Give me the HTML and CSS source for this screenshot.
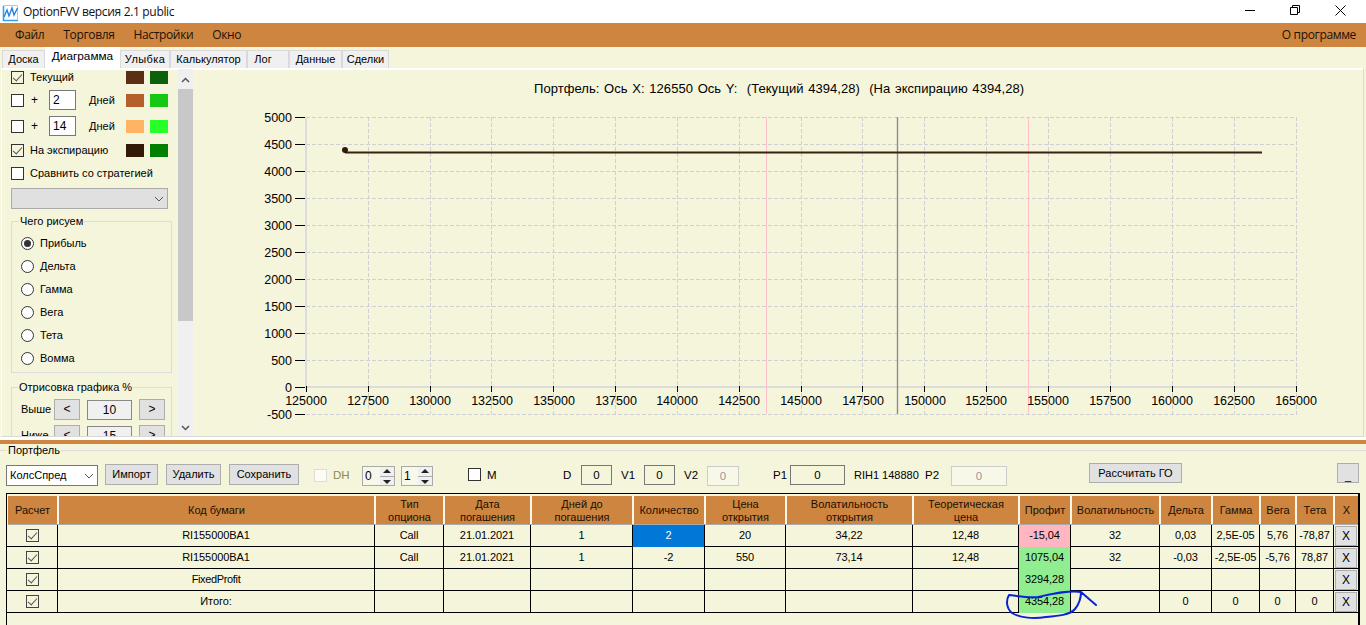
FILE: index.html
```html
<!DOCTYPE html>
<html lang="ru">
<head>
<meta charset="utf-8">
<title>OptionFVV</title>
<link rel="stylesheet" href="styles.css">
</head>
<body>
<div class="app">
  <header class="titlebar">
    <svg class="logo" width="18" height="20" viewBox="0 0 18 20"><path d="M2.5 4V18.5H17" fill="none" stroke="#35a0f0" stroke-width="1.6"/><path d="M2.5 3.5H16.5V18" fill="none" stroke="#9ccff2" stroke-width="1"/><path d="M3 15L6 8L8 14L11 6L13 13L16.500 6" fill="none" stroke="#2484dc" stroke-width="1.4"/></svg>
    <span class="apptitle">OptionFVV версия 2.1 public</span>
    <div class="winctl">
      <svg width="11" height="11" viewBox="0 0 11 11"><path d="M0 5.5H10" stroke="#000"/></svg>
      <svg width="11" height="11" viewBox="0 0 11 11"><path d="M.5 2.5H7.5V9.5H.5ZM2.5 2.5V.5H9.5V7.5H7.5" fill="none" stroke="#000"/></svg>
      <svg width="11" height="11" viewBox="0 0 11 11"><path d="M.5 .5L10.5 10.5M10.5 .5L.5 10.5" stroke="#000"/></svg>
    </div>
  </header>

  <nav class="menubar">
    <span class="mi m1">Файл</span><span class="mi m2">Торговля</span><span class="mi m3">Настройки</span><span class="mi m4">Окно</span>
    <span class="mi about">О программе</span>
  </nav>

  <div class="tabs">
    <span class="tab t1">Доска</span><span class="tab t2 active">Диаграмма</span><span class="tab t3">Улыбка</span><span class="tab t4">Калькулятор</span><span class="tab t5">Лог</span><span class="tab t6">Данные</span><span class="tab t7">Сделки</span>
  </div>

  <section class="page">
    <aside class="side">
      <div class="row r1"><span class="cb on"></span><span class="txt w96">Текущий</span><span class="sw c1"></span><span class="sw c2"></span></div>
      <div class="row r2"><span class="cb"></span><span class="plus">+</span><span class="days">2</span><span class="dl">Дней</span><span class="sw c3"></span><span class="sw c4"></span></div>
      <div class="row r3"><span class="cb"></span><span class="plus">+</span><span class="days">14</span><span class="dl">Дней</span><span class="sw c5"></span><span class="sw c6"></span></div>
      <div class="row r4"><span class="cb on"></span><span class="txt w96">На экспирацию</span><span class="sw c7"></span><span class="sw c8"></span></div>
      <div class="row r5"><span class="cb"></span><span class="txt">Сравнить со стратегией</span></div>
      <div class="combo dis"><svg width="10" height="6" viewBox="0 0 10 6"><path d="M1 1L5 5L9 1" fill="none" stroke="#555"/></svg></div>
      <fieldset class="grp g1">
        <legend>Чего рисуем</legend>
        <div class="rad"><span class="ro on"></span>Прибыль</div>
        <div class="rad"><span class="ro"></span>Дельта</div>
        <div class="rad"><span class="ro"></span>Гамма</div>
        <div class="rad"><span class="ro"></span>Вега</div>
        <div class="rad"><span class="ro"></span>Тета</div>
        <div class="rad"><span class="ro"></span>Вомма</div>
      </fieldset>
      <fieldset class="grp g2">
        <legend>Отрисовка графика %</legend>
        <div class="pr"><span class="prl">Выше</span><span class="pb">&lt;</span><span class="pv">10</span><span class="pb">&gt;</span></div>
        <div class="pr"><span class="prl">Ниже</span><span class="pb">&lt;</span><span class="pv">15</span><span class="pb">&gt;</span></div>
      </fieldset>
    </aside>
    <div class="vscroll">
      <svg class="arr" width="9" height="6" viewBox="0 0 9 6"><path d="M1 5L4.5 1.5L8 5" fill="none" stroke="#555" stroke-width="1.5"/></svg>
      <div class="thumb"></div>
      <svg class="arr dn" width="9" height="6" viewBox="0 0 9 6"><path d="M1 1L4.5 4.5L8 1" fill="none" stroke="#555" stroke-width="1.5"/></svg>
    </div>
    <div class="chart">
      <svg class="plot" width="1170" height="367" viewBox="193 69 1170 367">
        <g class="grid">
          <path d="M306 117.5H1297M306 144.5H1297M306 171.5H1297M306 198.5H1297M306 225.5H1297M306 252.5H1297M306 279.5H1297M306 306.5H1297M306 333.5H1297M306 360.5H1297M306 414.5H1297"/>
          <path d="M368.5 117V414M430.5 117V414M491.5 117V414M553.5 117V414M615.5 117V414M677.5 117V414M739.5 117V414M801.5 117V414M862.5 117V414M924.5 117V414M986.5 117V414M1048.5 117V414M1110.5 117V414M1172.5 117V414M1234.5 117V414M1296.5 117V414"/>
        </g>
        <path class="axis" d="M306 117V388M305 387H1297"/>
        <path class="pink" d="M766.5 117V414M1028.5 117V414"/>
        <path class="spot" d="M897.5 117V414"/>
        <path class="ticks" d="M295 117.5H305M295 144.5H305M295 171.5H305M295 198.5H305M295 225.5H305M295 252.5H305M295 279.5H305M295 306.5H305M295 333.5H305M295 360.5H305M295 387.5H305M295 414.5H305M306.5 386V392M368.5 386V392M430.5 386V392M491.5 386V392M553.5 386V392M615.5 386V392M677.5 386V392M739.5 386V392M801.5 386V392M862.5 386V392M924.5 386V392M986.5 386V392M1048.5 386V392M1110.5 386V392M1172.5 386V392M1234.5 386V392M1296.5 386V392"/>
        <path class="series" d="M345 152.5H1262"/>
        <circle class="dot" cx="345" cy="150" r="3"/>
        <text class="ctitle" x="534" y="93" xml:space="preserve">Портфель: Ось X: 126550 Ось Y:  (Текущий 4394,28)  (На экспирацию 4394,28)</text>
        <g class="yl">
          <text x="292" y="122">5000</text><text x="292" y="149">4500</text><text x="292" y="176">4000</text><text x="292" y="203">3500</text><text x="292" y="230">3000</text><text x="292" y="257">2500</text><text x="292" y="284">2000</text><text x="292" y="311">1500</text><text x="292" y="338">1000</text><text x="292" y="365">500</text><text x="292" y="392">0</text><text x="292" y="419">-500</text>
        </g>
        <g class="xl">
          <text x="306" y="405">125000</text><text x="368" y="405">127500</text><text x="430" y="405">130000</text><text x="492" y="405">132500</text><text x="554" y="405">135000</text><text x="616" y="405">137500</text><text x="677" y="405">140000</text><text x="739" y="405">142500</text><text x="801" y="405">145000</text><text x="863" y="405">147500</text><text x="925" y="405">150000</text><text x="986" y="405">152500</text><text x="1048" y="405">155000</text><text x="1110" y="405">157500</text><text x="1172" y="405">160000</text><text x="1234" y="405">162500</text><text x="1296" y="405">165000</text>
        </g>
      </svg>
    </div>
  </section>

  <div class="split"></div>

  <fieldset class="portfolio">
    <legend>Портфель</legend>
    <div class="toolbar">
      <div class="combo pick w92 t2m"><span>КолсСпред</span><svg width="10" height="6" viewBox="0 0 10 6"><path d="M1 1L5 5L9 1" fill="none" stroke="#555"/></svg></div>
      <span class="btn ml7 w53 t1m">Импорт</span>
      <span class="btn ml8 w55 t1m">Удалить</span>
      <span class="btn ml8 w70 t1m">Сохранить</span>
      <span class="cb off ml15 t6m"></span>
      <span class="lb dim ml6 w16">DH</span>
      <div class="spin ml13 w33"><span>0</span><i class="sbs"><b class="up"></b><b class="down"></b></i></div>
      <div class="spin ml6 w32"><span>1</span><i class="sbs"><b class="up"></b><b class="down"></b></i></div>
      <span class="cb ml35 t5m"></span>
      <span class="lb ml6 w12">M</span>
      <span class="lb ml64 w9">D</span>
      <span class="fld ml9 w31">0</span>
      <span class="lb ml9 w13">V1</span>
      <span class="fld ml10 w31">0</span>
      <span class="lb ml9 w14">V2</span>
      <span class="fld off ml9 w32">0</span>
      <span class="lb ml34 w12">P1</span>
      <span class="fld ml5 w55">0</span>
      <span class="lb tight ml9 w63">RIH1 148880</span>
      <span class="lb ml8 w16">P2</span>
      <span class="fld off ml10 w56">0</span>
      <span class="btn hi ml82 w93">Рассчитать ГО</span>
      <span class="btn hi low ml155 w22">_</span>
    </div>

    <div class="table">
      <div class="tr th">
        <span>Расчет</span><span>Код бумаги</span><span>Тип<br>опциона</span><span>Дата<br>погашения</span><span>Дней до<br>погашения</span><span>Количество</span><span>Цена<br>открытия</span><span>Волатильность<br>открытия</span><span>Теоретическая<br>цена</span><span>Профит</span><span>Волатильность</span><span>Дельта</span><span>Гамма</span><span>Вега</span><span>Тета</span><span>X</span>
      </div>
      <div class="tr">
        <span><i class="cb on"></i></span><span>RI155000BA1</span><span>Call</span><span>21.01.2021</span><span>1</span><span class="sel">2</span><span>20</span><span>34,22</span><span>12,48</span><span class="loss">-15,04</span><span>32</span><span>0,03</span><span>2,5E-05</span><span>5,76</span><span>-78,87</span><span class="xc"><b>X</b></span>
      </div>
      <div class="tr">
        <span><i class="cb on"></i></span><span>RI155000BA1</span><span>Call</span><span>21.01.2021</span><span>1</span><span>-2</span><span>550</span><span>73,14</span><span>12,48</span><span class="gain">1075,04</span><span>32</span><span>-0,03</span><span>-2,5E-05</span><span>-5,76</span><span>78,87</span><span class="xc"><b>X</b></span>
      </div>
      <div class="tr">
        <span><i class="cb on"></i></span><span class="fixed">FixedProfit</span><span></span><span></span><span></span><span></span><span></span><span></span><span></span><span class="gain">3294,28</span><span></span><span></span><span></span><span></span><span></span><span class="xc"><b>X</b></span>
      </div>
      <div class="tr">
        <span><i class="cb on"></i></span><span>Итого:</span><span></span><span></span><span></span><span></span><span></span><span></span><span></span><span class="gain">4354,28</span><span></span><span>0</span><span>0</span><span>0</span><span>0</span><span class="xc"><b>X</b></span>
      </div>
    </div>
  </fieldset>

  <svg class="scribble" width="110" height="40" viewBox="1000 585 110 40"><path d="M1081 592C1068 590 1052 594 1038 597C1028 598 1018 596 1009 595C1006 600 1006 608 1012 613C1020 618 1034 619 1046 617C1058 616 1070 615 1075 609C1079 604 1081 598 1081 592L1096 605" fill="none" stroke="#0a22d6" stroke-width="2" stroke-linecap="round" stroke-linejoin="round"/></svg>
</div>
</body>
</html>
```
FILE: styles.css
```css
* { box-sizing: border-box; }
html, body { margin: 0; padding: 0; height: 625px; overflow: hidden; }
body { font: 11px/13px "Liberation Sans", Arial, sans-serif; color: #000; background: #f5f5dc; }
.app { position: relative; width: 1366px; height: 625px; overflow: hidden; display: flex; flex-direction: column; }

.titlebar { height: 23px; background: #fff; display: flex; align-items: center; flex: none; }
.logo { margin: 1px 0 0 1px; flex: none; }
.apptitle { font: 12px/16px "Open Sans", "Noto Sans", sans-serif; margin-left: 4px; letter-spacing: -.33px; color: #111; }
.winctl { margin-left: auto; display: flex; width: 101px; justify-content: space-between; margin-right: 20px; margin-top: -2px; }

.menubar { height: 24px; background: #cd853f; display: flex; align-items: center; flex: none; padding-left: 15px; padding-right: 10px; font: 12px/16px "Open Sans", "Noto Sans", sans-serif; letter-spacing: -.35px; color: #1c1208; }
.m2 { margin-left: 19px; }
.m3 { margin-left: 19px; }
.m4 { margin-left: 19px; }
.about { margin-left: auto; }

.tabs { height: 21px; flex: none; display: flex; align-items: flex-end; padding-left: 2px; background: #f5f5dc; }
.tab { height: 18px; background: #f0f0f0; border: 1px solid #d9d9d9; border-bottom: 0; text-align: center; line-height: 16px; font-size: 11px; white-space: nowrap; }
.tab.active { height: 21px; background: #fff; border-color: #fff; line-height: 17px; font-size: 11.8px; }
.t1 { width: 43px; } .t2 { width: 75px; } .t3 { width: 50px; letter-spacing: .4px; } .t4 { width: 77px; } .t5 { width: 42px; padding-right: 10px; } .t6 { width: 53px; } .t7 { width: 47px; }

.page { height: 369px; flex: none; display: flex; margin: 0 2px 0 1px; border: 1px solid #d9d9d9; border-left-color: #fff; border-top-color: #fff; background: #f5f5dc; box-shadow: inset 0 1px 0 #fff; }
.side { width: 176px; flex: none; height: 100%; overflow: hidden; padding-left: 9px; }
.row { display: flex; align-items: center; height: 20px; }
.r1 { height: 16px; }
.r2 { margin-top: 5px; } .r3 { margin-top: 6px; } .r4 { margin-top: 4px; } .r5 { margin-top: 3px; }

.cb { display: inline-block; position: relative; width: 13px; height: 13px; border: 1px solid #333; background: #fff; flex: none; }
.cb.on { background: #f5f5dc; }
.cb.on::after { content: ""; position: absolute; left: 3px; top: 0; width: 4px; height: 8px; border: solid #555; border-width: 0 1.5px 1.5px 0; transform: rotate(42deg); }
.cb.off { background: #fcfcf4; border-color: #ddd; }
.txt { margin-left: 6px; white-space: nowrap; }
.w96 { width: 96px; }
.plus { margin-left: 7px; width: 18px; font-size: 12px; }
.days { width: 27px; height: 20px; background: #fff; border: 1px solid #777; padding-left: 3px; line-height: 18px; font-size: 12px; }
.dl { margin-left: 13px; width: 37px; }
.sw { width: 18px; height: 13px; flex: none; }
.sw + .sw { margin-left: 6px; }
.c1 { background: #5c2e14; } .c2 { background: #0b620b; } .c3 { background: #b5602c; } .c4 { background: #14c814; } .c5 { background: #ffb365; } .c6 { background: #28ff28; } .c7 { background: #331a08; } .c8 { background: #008000; }

.combo { display: flex; align-items: center; justify-content: flex-end; height: 21px; border: 1px solid #aaa; padding-right: 3px; }
.combo.dis { width: 157px; margin: 5px 0 0 0; background: #e0e0e0; }
.combo.pick { background: #fff; border-color: #777; justify-content: space-between; padding: 0 3px; font-size: 11px; }

.grp { margin: 0; padding: 0; border: 1px solid #dcdcdc; width: 161px; min-width: 0; }
.grp legend { padding: 0 1px; margin-left: 7px; font-size: 11px; line-height: 13px; }
.g1 { height: 158px; margin-top: 6px; padding-top: 4px; }
.g2 { height: 80px; margin-top: 8px; padding-top: 5px; }
.g2 legend { margin-left: 6px; }
.rad { display: flex; align-items: center; height: 23px; padding-left: 9px; }
.ro { width: 13px; height: 13px; border: 1px solid #333; border-radius: 50%; background: #fff; margin-right: 6px; position: relative; flex: none; }
.ro.on::after { content: ""; position: absolute; left: 2px; top: 2px; width: 7px; height: 7px; border-radius: 50%; background: #333; }
.pr { display: flex; align-items: center; height: 21px; margin-bottom: 5px; padding-left: 9px; font-size: 11px; }
.prl { width: 33px; }
.pb { width: 26px; height: 21px; background: #e1e1e1; border: 1px solid #adadad; text-align: center; line-height: 19px; font-size: 12px; }
.pv { width: 45px; height: 20px; margin: 0 7px; background: #f0f0f0; border: 1px solid #888; text-align: center; line-height: 18px; font-size: 12px; }

.vscroll { width: 15px; flex: none; background: #f0f0f0; display: flex; flex-direction: column; align-items: center; }
.arr { margin: 8px 0 6px; flex: none; }
.arr.dn { margin: auto 0 5px; }
.thumb { width: 15px; height: 232px; background: #c8c8c8; flex: none; }

.chart { flex: 1; min-width: 0; }
.plot { display: block; }
.grid path { stroke: #cfcfd4; stroke-width: 1; stroke-dasharray: 4 2; fill: none; }
.axis { stroke: #dcdcdc; stroke-width: 2; fill: none; }
.pink { stroke: #ffc0cb; stroke-width: 1; fill: none; }
.spot { stroke: #8c8c8c; stroke-width: 1.4; fill: none; }
.ticks { stroke: #000; stroke-width: 1; fill: none; }
.series { stroke: #3a2210; stroke-width: 2; fill: none; }
.dot { fill: #331a08; }
.plot text { font-family: "Liberation Sans", Arial, sans-serif; fill: #000; }
.ctitle { font-size: 13px; word-spacing: 1px; letter-spacing: .05px; }
.yl text { font-size: 12.5px; text-anchor: end; }
.xl text { font-size: 12.5px; text-anchor: middle; }

.split { height: 7px; flex: none; border-top: 3px solid #fff; background: #cd853f; }

.portfolio { flex: 1; margin: 0; padding: 1px 0 0; border: 0; border-top: 1px solid #dcdcdc; min-width: 0; position: relative; }
.portfolio > legend { padding: 0 1px; margin-left: 7px; line-height: 13px; }
.toolbar { display: flex; align-items: flex-start; height: 23px; margin-top: 6px; padding-left: 6px; white-space: nowrap; }
.btn { height: 21px; background: #e1e1e1; border: 1px solid #adadad; text-align: center; line-height: 19px; flex: none; }
.btn.hi { height: 20px; line-height: 18px; margin-top: -1px; }
.btn.low { line-height: 24px; }
.lb { margin-top: 5px; flex: none; font-size: 11.5px; }
.lb.tight { font-size: 11px; }
.dim { color: #8a8a55; }
.fld { height: 20px; margin-top: 1px; border: 1px solid #777; text-align: center; line-height: 18px; flex: none; font-size: 11.5px; }
.fld.off { border-color: #ccc; color: #999; background: #f8f8e8; margin-top: 2px; }
.spin { display: flex; height: 20px; margin-top: 2px; border: 1px solid #aaa; background: #f7f7ea; justify-content: space-between; padding-left: 2px; line-height: 18px; flex: none; font-size: 12px; }
.sbs { width: 14px; display: flex; flex-direction: column; gap: 1px; background: #aaa; }
.sbs b { flex: 1; background: #f0f0f0; position: relative; }
.sbs b::after { content: ""; position: absolute; left: 3px; border: 4px solid transparent; }
.sbs .up::after { top: -1px; border-bottom: 4px solid #222; border-top: 0; margin-top: 3px; }
.sbs .down::after { top: 3px; border-top: 4px solid #222; border-bottom: 0; }
.t1m { margin-top: 0; } .t2m { margin-top: 1px; } .t5m { margin-top: 4px; } .t6m { margin-top: 5px; }
.cb.t5m, .cb.t6m { align-self: flex-start; }
.ml5 { margin-left: 5px; } .ml6 { margin-left: 6px; } .ml7 { margin-left: 7px; } .ml8 { margin-left: 8px; } .ml9 { margin-left: 9px; } .ml10 { margin-left: 10px; } .ml13 { margin-left: 13px; } .ml15 { margin-left: 15px; } .ml34 { margin-left: 34px; } .ml35 { margin-left: 35px; } .ml64 { margin-left: 64px; } .ml82 { margin-left: 82px; } .ml155 { margin-left: 155px; }
.w9 { width: 9px; } .w12 { width: 12px; } .w13 { width: 13px; } .w14 { width: 14px; } .w16 { width: 16px; } .w22 { width: 22px; } .w31 { width: 31px; } .w32 { width: 32px; } .w33 { width: 33px; } .w53 { width: 53px; } .w55 { width: 55px; } .w56 { width: 56px; } .w63 { width: 63px; } .w70 { width: 70px; } .w92 { width: 92px; } .w93 { width: 93px; }

.table { width: 1354px; height: 160px; margin: 6px 0 0 6px; border: 1px solid #000; border-width: 1px 2px 0 1px; padding-top: 2px; }
.tr { display: grid; grid-template-columns: 51px 317px 69px 87px 102px 72px 81px 127px 106px 52px 89px 52px 48px 36px 38px 24px; height: 22px; border-bottom: 1px solid #000; }
.tr > span { display: flex; align-items: center; justify-content: center; text-align: center; border-right: 1px solid #000; font-size: 11px; letter-spacing: -.08px; white-space: nowrap; padding-bottom: 1px; }
.tr > span:last-child { border-right: 0; }
.tr > .fixed { letter-spacing: -.35px; }
.tr .cb { background: transparent; border-color: #444; }
.th { height: 29px; background: #cd853f; border-bottom: 1px solid #aaa; margin-left: 1px; }
.tr.th > span { border-right: 2px solid #fbf8ee; line-height: 13px; color: #1a1005; padding: 1px 0 0; letter-spacing: 0; }
.tr.th > span:last-child { border-right: 0; }
.th { grid-template-columns: 51px 317px 69px 87px 102px 72px 81px 127px 106px 52px 89px 52px 48px 36px 38px 23px; }
.tr > .sel { background: #0078d7; color: #fff; }
.tr > .loss { background: #ffb6c1; }
.tr > .gain { background: #90ee90; }
.tr > .xc { padding: 1px; }
.xc b { display: block; width: 22px; height: 20px; background: #e1e1e1; border: 1px solid #adadad; font-weight: normal; text-align: center; line-height: 18px; font-size: 12px; }

.scribble { position: absolute; left: 1000px; top: 585px; pointer-events: none; }
```
